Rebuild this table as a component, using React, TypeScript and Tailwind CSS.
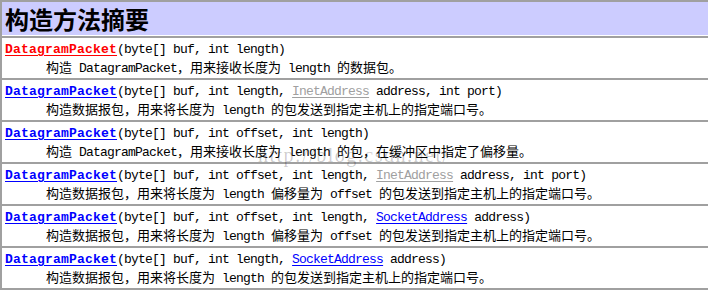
import React from "react";

type Seg = { t: string; kind?: "gray" | "blue" };
type Row = { red?: boolean; params: Seg[]; desc: string };

const D2 = "构造数据报包，用来将长度为 length 的包发送到指定主机上的指定端口号。";
const D4 = "构造数据报包，用来将长度为 length 偏移量为 offset 的包发送到指定主机上的指定端口号。";

const rows: Row[] = [
  { red: true, params: [{ t: "(byte[] buf, int length)" }], desc: "构造 DatagramPacket，用来接收长度为 length 的数据包。" },
  {
    params: [{ t: "(byte[] buf, int length, " }, { t: "InetAddress", kind: "gray" }, { t: " address, int port)" }],
    desc: D2,
  },
  { params: [{ t: "(byte[] buf, int offset, int length)" }], desc: "构造 DatagramPacket，用来接收长度为 length 的包，在缓冲区中指定了偏移量。" },
  {
    params: [{ t: "(byte[] buf, int offset, int length, " }, { t: "InetAddress", kind: "gray" }, { t: " address, int port)" }],
    desc: D4,
  },
  {
    params: [{ t: "(byte[] buf, int offset, int length, " }, { t: "SocketAddress", kind: "blue" }, { t: " address)" }],
    desc: D4,
  },
  {
    params: [{ t: "(byte[] buf, int length, " }, { t: "SocketAddress", kind: "blue" }, { t: " address)" }],
    desc: D2,
  },
];

const CJK = /([\u3000-\u303f\u4e00-\u9fff\uff00-\uffef]+)/;

function Mixed({ text }: { text: string }) {
  return (
    <>
      {text.split(CJK).map((p, i) =>
        i % 2 === 1 ? (
          <span key={i} className="font-['Noto_Sans_CJK_SC',sans-serif] text-[13px] tracking-normal">
            {p}
          </span>
        ) : (
          <span key={i}>{p}</span>
        )
      )}
    </>
  );
}

export default function App() {
  return (
    <div className="relative w-[708px] h-[292px] bg-white overflow-hidden font-['Liberation_Mono',monospace] text-[13px] tracking-[-0.8px] leading-[17px] text-black">
      <div className="border-l-2 border-[#a0a0a0]">
        <div className="border-t-2 border-[#a0a0a0] pb-px">
          <div className="h-[33px] bg-[#ccccff] flex items-center pl-[3px] font-['Noto_Sans_CJK_SC',sans-serif] font-bold text-[24px] tracking-normal leading-none text-black">
            构造方法摘要
          </div>
        </div>
        {rows.map((r, i) => (
          <div
            key={i}
            className={
              i === rows.length - 1
                ? "border-t-2 border-b-2 border-[#a0a0a0] pt-[3px] pb-[3px] pl-[3px]"
                : "border-t-2 border-[#a0a0a0] pt-[3px] pb-[3px] pl-[3px]"
            }
          >
            <div className="whitespace-pre h-[17px]">
              <a
                className={
                  r.red
                    ? "font-bold tracking-[0.2px] text-[#ff0000] underline underline-offset-2"
                    : "font-bold tracking-[0.2px] text-[#0000ff] underline underline-offset-2"
                }
              >
                DatagramPacket
              </a>
              {r.params.map((s, j) =>
                s.kind === "gray" ? (
                  <a key={j} className="text-[#a0a0a0] underline underline-offset-2">
                    {s.t}
                  </a>
                ) : s.kind === "blue" ? (
                  <a key={j} className="text-[#0000ff] underline underline-offset-2">
                    {s.t}
                  </a>
                ) : (
                  <span key={j}>{s.t}</span>
                )
              )}
            </div>
            <div className="whitespace-pre h-[17px] pl-[41px]">
              <Mixed text={r.desc} />
            </div>
          </div>
        ))}
      </div>
      <div className="pointer-events-none absolute left-[258px] top-[145px] font-['Liberation_Serif',serif] text-[20px] leading-none tracking-[1.5px] text-black/20">
        http://blog.csdn.net/
      </div>
    </div>
  );
}
